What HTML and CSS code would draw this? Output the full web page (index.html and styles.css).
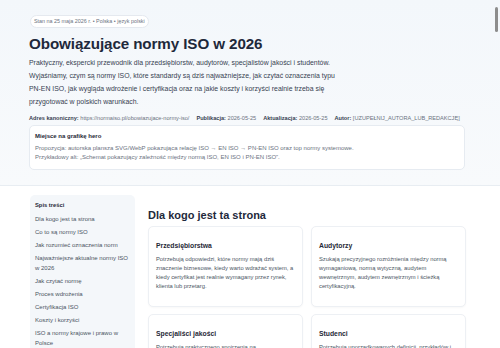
FILE: index.html
```html
<!DOCTYPE html>
<html lang="pl">
<head>
  <meta charset="UTF-8" />
  <meta name="viewport" content="width=device-width, initial-scale=1.0" />
  <title>Obowiązujące normy ISO w 2026</title>
  <link rel="stylesheet" href="styles.css">
</head>
<body>
  <header class="hero">
    <div class="wrap">
      <div class="pill">Stan na 25 maja 2026 r. • Polska • język polski</div>
      <h1>Obowiązujące normy ISO w 2026</h1>
      <p class="lead">Praktyczny, ekspercki przewodnik dla przedsiębiorstw, audytorów, specjalistów jakości i studentów. Wyjaśniamy, czym są normy ISO, które standardy są dziś najważniejsze, jak czytać oznaczenia typu PN-EN ISO, jak wygląda wdrożenie i certyfikacja oraz na jakie koszty i korzyści realnie trzeba się przygotować w polskich warunkach.</p>
      <p class="meta">
        <span><b>Adres kanoniczny:</b> https://normaiso.pl/obowiazujace-normy-iso/</span>
        <span><b>Publikacja:</b> 2026-05-25</span>
        <span><b>Aktualizacja:</b> 2026-05-25</span>
        <span><b>Autor:</b> [UZUPEŁNIJ_AUTORA_LUB_REDAKCJĘ]</span>
      </p>
      <div class="figure">
        <strong>Miejsce na grafikę hero</strong>
        <p>Propozycja: autorska plansza SVG/WebP pokazująca relację ISO → EN ISO → PN-EN ISO oraz top normy systemowe.</p>
        <p>Przykładowy alt: „Schemat pokazujący zależność między normą ISO, EN ISO i PN-EN ISO”.</p>
      </div>
    </div>
  </header>

  <div class="layout">
    <nav class="toc">
      <strong>Spis treści</strong>
      <a href="#">Dla kogo jest ta strona</a>
      <a href="#">Co to są normy ISO</a>
      <a href="#">Jak rozumieć oznaczenia norm</a>
      <a href="#">Najważniejsze aktualne normy ISO w 2026</a>
      <a href="#">Jak czytać normę</a>
      <a href="#">Proces wdrożenia</a>
      <a href="#">Certyfikacja ISO</a>
      <a href="#">Koszty i korzyści</a>
      <a href="#">ISO a normy krajowe i prawo w Polsce</a>
    </nav>

    <main class="content">
      <h2>Dla kogo jest ta strona</h2>
      <div class="cards">
        <div class="card">
          <h3>Przedsiębiorstwa</h3>
          <p>Potrzebują odpowiedzi, które normy mają dziś znaczenie biznesowe, kiedy warto wdrażać system, a kiedy certyfikat jest realnie wymagany przez rynek, klienta lub przetarg.</p>
        </div>
        <div class="card">
          <h3>Audytorzy</h3>
          <p>Szukają precyzyjnego rozróżnienia między normą wymaganiową, normą wytyczną, audytem wewnętrznym, audytem zewnętrznym i ścieżką certyfikacyjną.</p>
        </div>
        <div class="card">
          <h3>Specjaliści jakości</h3>
          <p>Potrzebują praktycznego spojrzenia na dokumentację, ryzyka, cele i wskaźniki oraz na to, jak utrzymać system po certyfikacji.</p>
        </div>
        <div class="card">
          <h3>Studenci</h3>
          <p>Potrzebują uporządkowanych definicji, przykładów i kontekstu, który pozwala zrozumieć rolę norm w gospodarce.</p>
        </div>
      </div>
    </main>
  </div>

  <div class="scroll-thumb"></div>
</body>
</html>
```

FILE: styles.css
```css
* {
  box-sizing: border-box;
}
html, body {
  height: 100%;
  overflow: hidden;
}
body {
  margin: 0;
  background: #fff;
  color: #1f2937;
  font-family: 'Liberation Sans', Arial, sans-serif;
}
.hero {
  background: linear-gradient(180deg, #f3f7fb 0%, #f8fafc 100%);
  border-bottom: 1px solid #e8edf2;
  padding: 15px 0 15px;
}
.wrap {
  width: 436px;
  margin-left: 29px;
}
.pill {
  width: fit-content;
  font-size: 5.4px;
  line-height: 7px;
  color: #6b7280;
  background: #fff;
  border: 1px solid #e5e9ef;
  border-radius: 10px;
  padding: 2px 3px;
  margin-left: 1px;
}
h1 {
  font-size: 15.2px;
  line-height: 17px;
  margin: 7px 0 4px;
  color: #1e293b;
  letter-spacing: -0.1px;
}
.lead {
  font-size: 6.9px;
  line-height: 13px;
  color: #374151;
  max-width: 306px;
  margin: 0 0 7px;
}
.meta {
  font-size: 5.6px;
  line-height: 7px;
  color: #6b7280;
  margin: 0 0 3px;
  display: flex;
  gap: 7px;
  white-space: nowrap;
}
.meta b {
  color: #374151;
}
.figure {
  background: #fff;
  border: 1px solid #e6ebf1;
  border-radius: 5px;
  padding: 7px 5px 7px;
  font-size: 6px;
  color: #6b7280;
}
.figure strong {
  display: block;
  color: #1f2937;
  font-size: 6px;
  line-height: 7px;
  margin-bottom: 4px;
}
.figure p {
  margin: 0;
  line-height: 9px;
}
.layout {
  display: grid;
  grid-template-columns: 105px 318px;
  gap: 13px;
  padding: 9px 0 0 30px;
}
.toc {
  background: #f4f7fa;
  border-radius: 5px;
  padding: 5px 5px;
  display: flex;
  flex-direction: column;
  gap: 3px;
  font-size: 6px;
  align-self: start;
}
.toc strong {
  color: #1f2937;
  font-size: 5.8px;
  line-height: 10px;
  margin-bottom: 1px;
}
.toc a {
  color: #4b5563;
  text-decoration: none;
  line-height: 10px;
}
.content h2 {
  font-size: 11px;
  line-height: 13px;
  margin: 14px 0 4px;
  color: #1e293b;
}
.cards {
  display: grid;
  grid-template-columns: 1fr 1fr;
  gap: 7px 8px;
}
.card {
  background: #fff;
  border: 1px solid #edf0f4;
  border-radius: 5px;
  padding: 15px 7px 15px;
  box-shadow: 0 1px 2px rgba(15, 23, 42, 0.03);
}
.card h3 {
  font-size: 6.8px;
  line-height: 8px;
  margin: 0 0 5px;
  color: #1f2937;
}
.card p {
  font-size: 5.8px;
  line-height: 9px;
  color: #4b5563;
  margin: 0;
}
.scroll-thumb {
  position: fixed;
  top: 7px;
  right: 2px;
  width: 3px;
  height: 25px;
  background: #8d8d8d;
  border-radius: 2px;
}
```
